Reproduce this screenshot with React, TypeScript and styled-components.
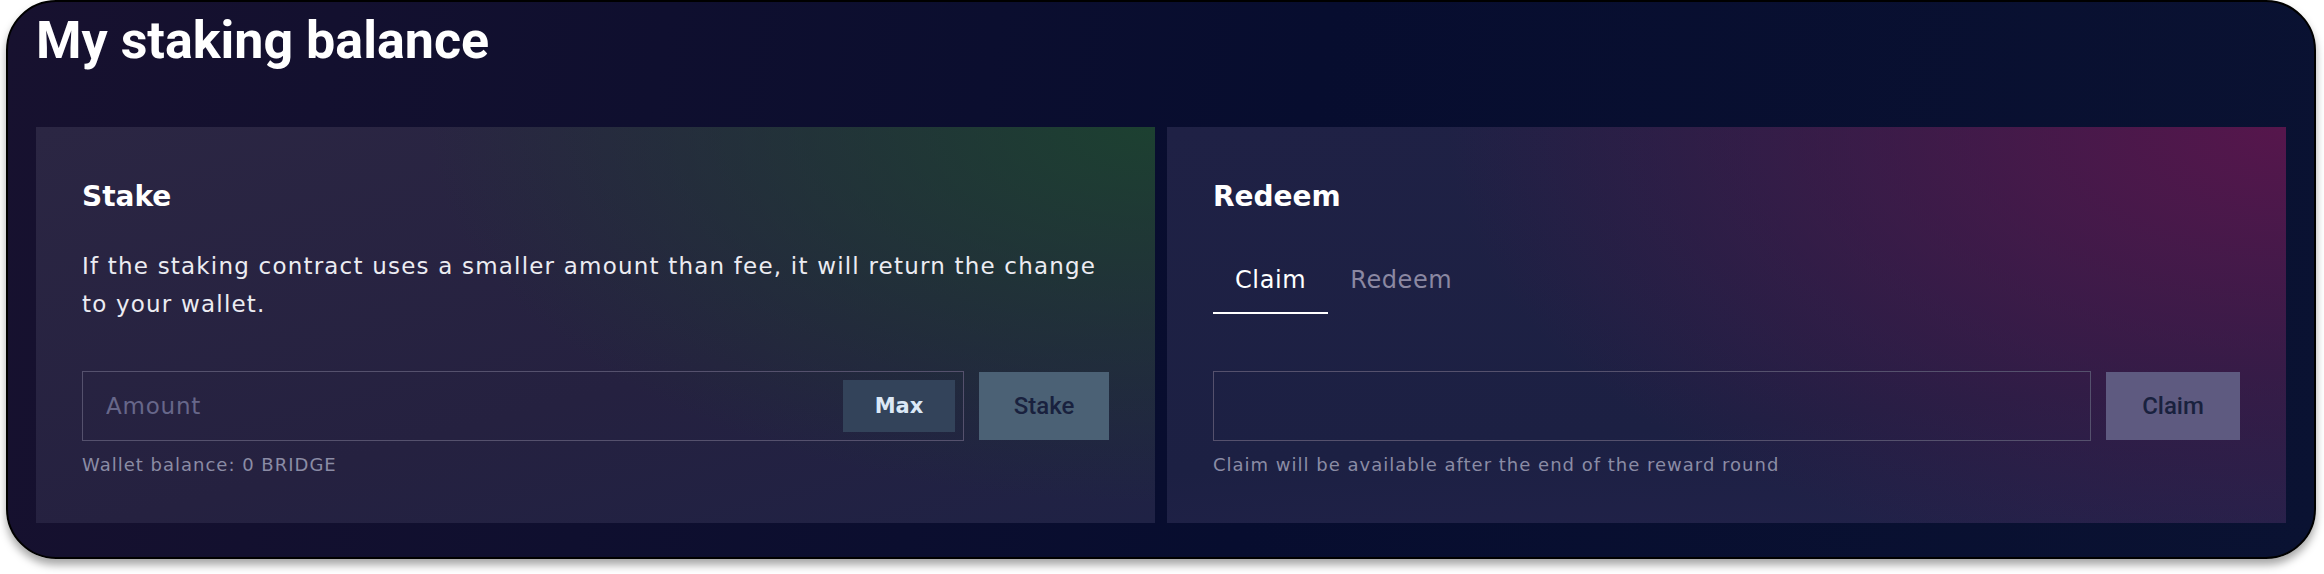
import { useState } from "react";
import styled, { createGlobalStyle } from "styled-components";

const GlobalStyle = createGlobalStyle`
  html, body {
    margin: 0;
    padding: 0;
    background: #ffffff;
    font-family: "DejaVu Sans", "Liberation Sans", sans-serif;
  }
`;

const Page = styled.div`
  padding: 0 8px 17px 6px;
`;

const Card = styled.section`
  width: 2310px;
  box-sizing: border-box;
  border: 2px solid #000;
  border-radius: 50px;
  background: linear-gradient(100deg, #17112f 0%, #070d2f 55%, #0a1232 100%);
  box-shadow: 0 6px 8px rgba(0, 0, 0, 0.35);
  padding: 8px 28px 34px 28px;
`;

const Title = styled.h1`
  margin: 0;
  height: 117px;
  font-family: Roboto, "Liberation Sans", sans-serif;
  font-size: 52px;
  line-height: 62px;
  font-weight: 700;
  color: #ffffff;
`;

const Panels = styled.div`
  display: grid;
  grid-template-columns: 1119px 1119px;
  gap: 12px;
`;

const Panel = styled.div<{ $tone: "green" | "pink" }>`
  height: 396px;
  box-sizing: border-box;
  padding: 52px 46px 0 46px;
  background: ${(p) =>
    p.$tone === "green"
      ? `radial-gradient(ellipse 65% 95% at 100% 0%, rgba(28, 66, 48, 0.95), rgba(28, 66, 48, 0) 100%),
         linear-gradient(165deg, #2b2643 0%, #252140 60%, #1f2245 100%)`
      : `radial-gradient(ellipse 75% 115% at 100% 0%, rgba(86, 22, 76, 1), rgba(86, 22, 76, 0) 100%),
         linear-gradient(175deg, #1f2145 0%, #1c2043 70%, #22224a 100%)`};
`;

const Heading = styled.h2`
  margin: 0;
  font-size: 28px;
  line-height: 35px;
  font-weight: 700;
  color: #ffffff;
`;

const Description = styled.p`
  margin: 33px 0 48px;
  font-size: 23px;
  line-height: 38px;
  letter-spacing: 1.2px;
  color: #ececf2;
`;

const Tabs = styled.div`
  display: flex;
  margin: 43px 0 57px;
`;

const Tab = styled.button<{ $active?: boolean }>`
  border: none;
  background: none;
  font-family: inherit;
  font-size: 24px;
  line-height: 30px;
  letter-spacing: 0.6px;
  padding: 8px 22px 17px;
  color: ${(p) => (p.$active ? "#ffffff" : "#8b88a2")};
  border-bottom: 2px solid ${(p) => (p.$active ? "#ffffff" : "transparent")};
  cursor: pointer;
`;

const Row = styled.div`
  display: flex;
  align-items: center;
  gap: 15px;
`;

const InputBox = styled.div`
  flex: 1;
  height: 70px;
  box-sizing: border-box;
  border: 1.5px solid #55516d;
  display: flex;
  align-items: center;
  padding: 0 8px 0 21px;
`;

const Input = styled.input`
  flex: 1;
  background: transparent;
  border: none;
  outline: none;
  font-family: inherit;
  font-size: 23px;
  letter-spacing: 0.8px;
  color: #fff;
  &::placeholder {
    color: #67678a;
  }
`;

const MaxButton = styled.button`
  width: 112px;
  height: 52px;
  border: none;
  background: #33435a;
  color: #dbe8f6;
  font-family: inherit;
  font-size: 21px;
  font-weight: 700;
`;

const ActionButton = styled.button<{ $bg: string }>`
  width: ${(p) => (p.$bg === "stake" ? "130px" : "134px")};
  height: 68px;
  border: none;
  background: ${(p) => (p.$bg === "stake" ? "#4b6175" : "#5e5a80")};
  color: #19213e;
  font-family: Roboto, "Liberation Sans", sans-serif;
  font-size: 24px;
  font-weight: 500;
`;

const Helper = styled.div`
  margin-top: 13px;
  font-size: 18px;
  line-height: 22px;
  letter-spacing: 1px;
  color: #8b8ca5;
`;

export default function App() {
  const [tab, setTab] = useState<"claim" | "redeem">("claim");

  return (
    <Page>
      <GlobalStyle />
      <Card>
        <Title>My staking balance</Title>
        <Panels>
          <Panel $tone="green">
            <Heading>Stake</Heading>
            <Description>
              If the staking contract uses a smaller amount than fee, it will return the change
              to your wallet.
            </Description>
            <Row>
              <InputBox>
                <Input placeholder="Amount" />
                <MaxButton>Max</MaxButton>
              </InputBox>
              <ActionButton $bg="stake">Stake</ActionButton>
            </Row>
            <Helper>Wallet balance: 0 BRIDGE</Helper>
          </Panel>
          <Panel $tone="pink">
            <Heading>Redeem</Heading>
            <Tabs>
              <Tab $active={tab === "claim"} onClick={() => setTab("claim")}>
                Claim
              </Tab>
              <Tab $active={tab === "redeem"} onClick={() => setTab("redeem")}>
                Redeem
              </Tab>
            </Tabs>
            <Row>
              <InputBox />
              <ActionButton $bg="claim">Claim</ActionButton>
            </Row>
            <Helper>Claim will be available after the end of the reward round</Helper>
          </Panel>
        </Panels>
      </Card>
    </Page>
  );
}
